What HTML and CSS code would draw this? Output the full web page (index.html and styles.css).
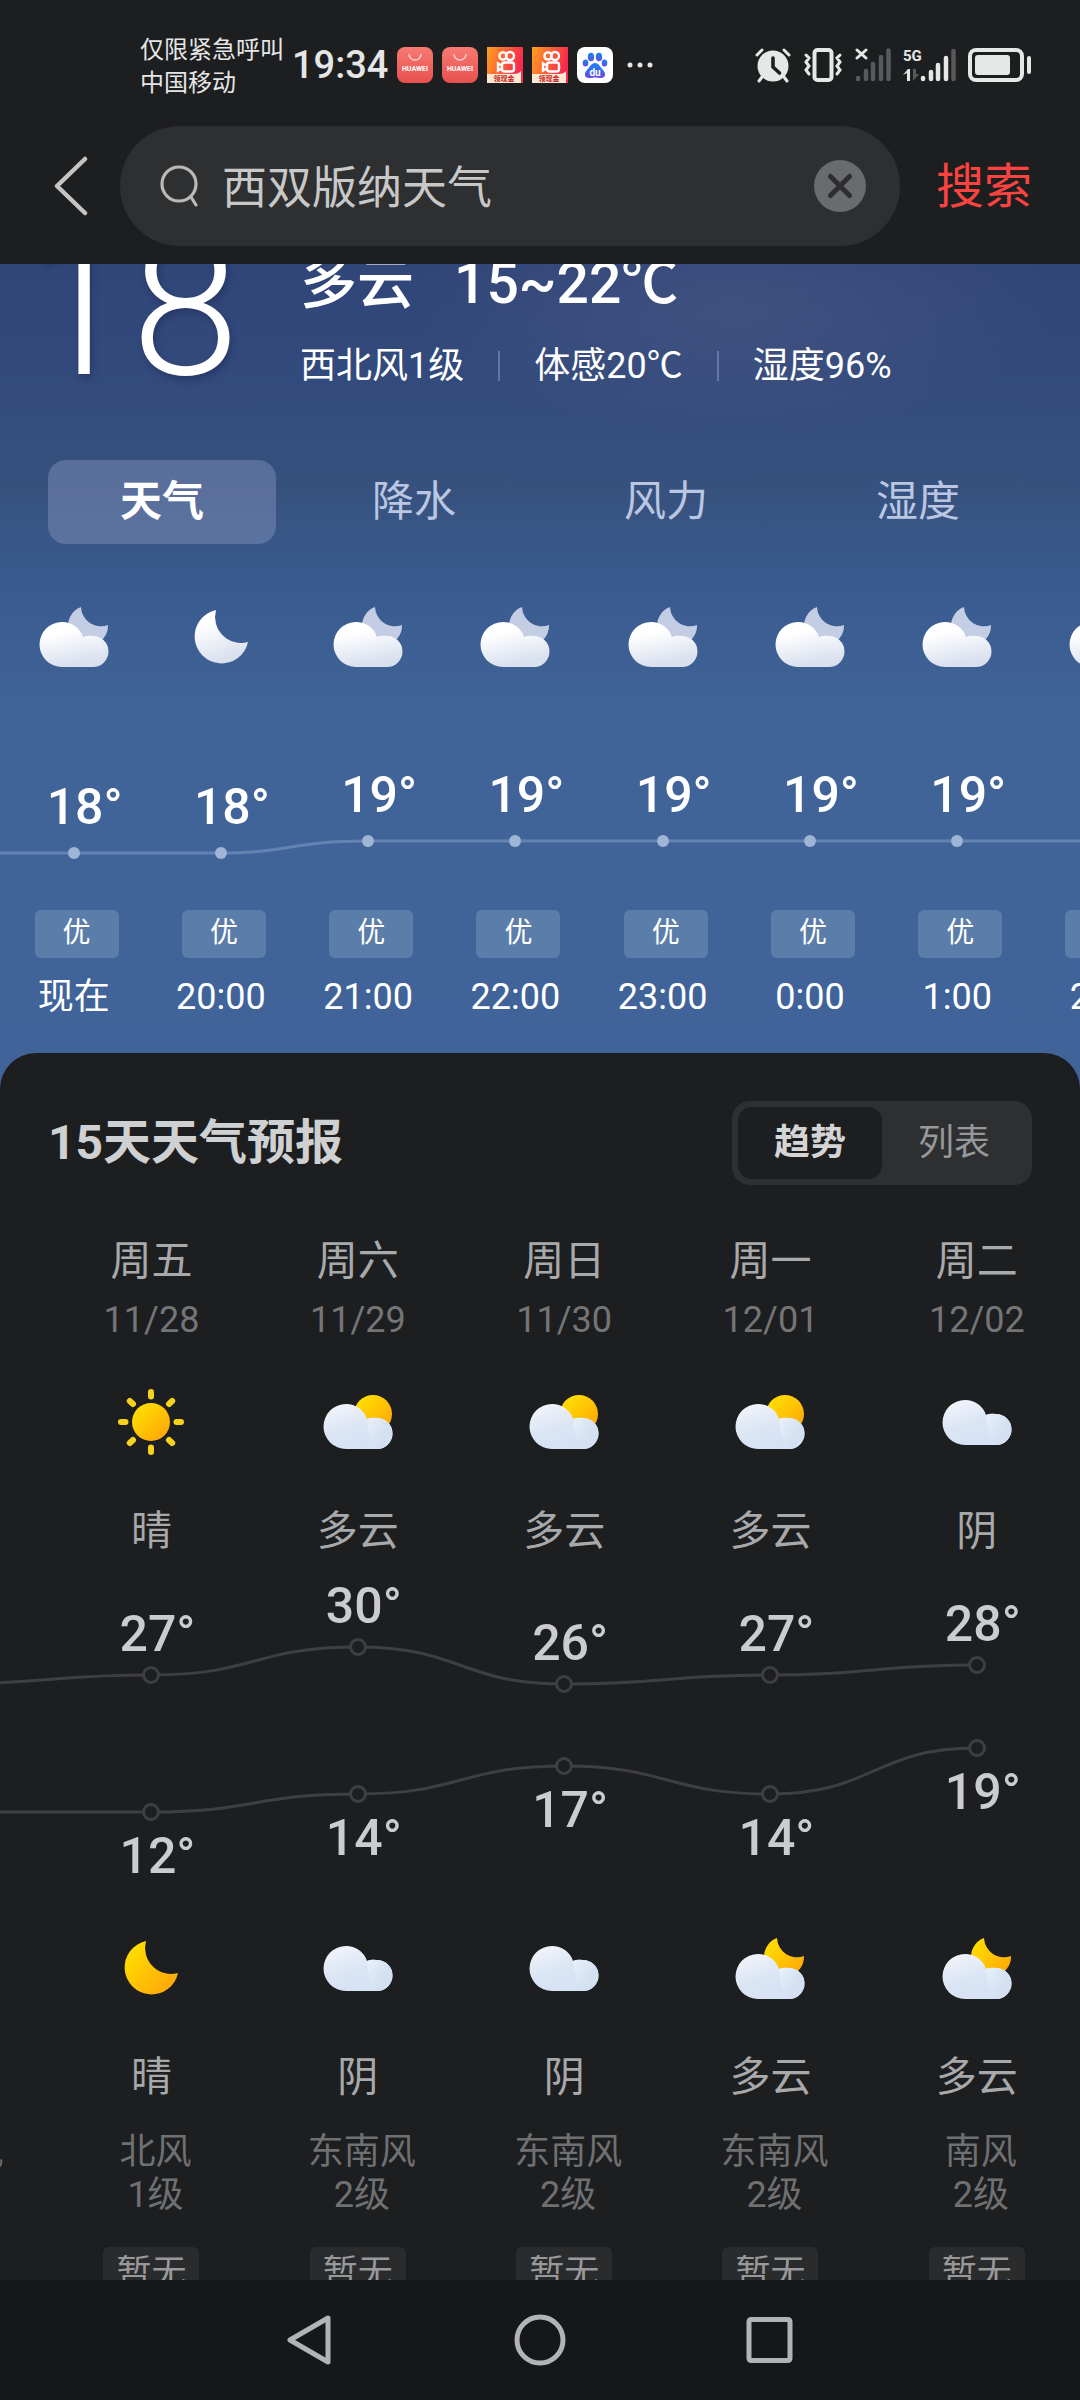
FILE: index.html
```html
<!DOCTYPE html>
<html lang="zh-CN">
<head>
<meta charset="utf-8">
<meta name="viewport" content="width=device-width, initial-scale=1">
<title>西双版纳天气</title>
<link rel="stylesheet" href="styles.css">
</head>
<body>
<svg class="defs" aria-hidden="true">
  <defs>
    <linearGradient id="g-white" x1="0" y1="0" x2="0.3" y2="1"><stop offset="0.3" stop-color="#fff"/><stop offset="1" stop-color="#d9e0ee"/></linearGradient>
    <linearGradient id="g-day" x1="0" y1="0" x2="0.5" y2="1"><stop offset="0" stop-color="#f6f6fb"/><stop offset="0.6" stop-color="#dae5f4"/><stop offset="1" stop-color="#d6e2f5"/></linearGradient>
    <linearGradient id="g-puff" x1="0" y1="0" x2="1" y2="0.7"><stop offset="0" stop-color="#eaf0fa"/><stop offset="0.7" stop-color="#d3e1f2"/></linearGradient>
    <linearGradient id="g-gold" x1="0" y1="0" x2="1" y2="1"><stop offset="0.1" stop-color="#ffe000"/><stop offset="1" stop-color="#ff9f0a"/></linearGradient>
    <linearGradient id="g-app" x1="0" y1="0" x2="1" y2="0.3"><stop offset="0" stop-color="#ffa01e"/><stop offset="1" stop-color="#f8284e"/></linearGradient>
    <linearGradient id="g-paw" x1="0" y1="0" x2="0" y2="1"><stop offset="0.2" stop-color="#1f7cf2"/><stop offset="1" stop-color="#6a4be0"/></linearGradient>
    <linearGradient id="g-shop" x1="0" y1="0" x2="0" y2="1"><stop offset="0" stop-color="#f77a72"/><stop offset="1" stop-color="#e8504f"/></linearGradient>
  </defs>
  <symbol id="cloud-moon" viewBox="0 0 72 72">
    <path d="M43 6A20 20 0 0 0 70 24A20 20 0 1 1 43 6Z" fill="#c3cde4"/>
    <path d="M24 21A22 22 0 0 1 45 36Q49 34 55 35A15 15 0 0 1 55 66H24A22 22 0 0 1 24 21Z" fill="url(#g-white)"/>
  </symbol>
  <symbol id="moon" viewBox="0 0 72 72">
    <path d="M31 9A26 26 0 0 0 63 41A27 27 0 1 1 31 9Z" fill="url(#g-white)"/>
  </symbol>
  <symbol id="moon-gold" viewBox="0 0 72 72">
    <path d="M31 9A26 26 0 0 0 63 41A27 27 0 1 1 31 9Z" fill="url(#g-gold)"/>
  </symbol>
  <symbol id="sun" viewBox="0 0 72 72">
    <circle cx="36" cy="36" r="19" fill="url(#g-gold)"/>
    <path d="M36 6V10.500M36 61.500V66M6 36H10.500M61.500 36H66M14.800 15L18 18M54 54L57.200 57M57.200 15L54 18M18 54L14.800 57" stroke="#f7d21c" stroke-width="6" stroke-linecap="round"/>
  </symbol>
  <symbol id="cloud" viewBox="0 0 72 72">
    <path d="M24 14A22 22 0 0 1 45 29Q49 27 55 28A15 15 0 0 1 55 59H24A22 22 0 0 1 24 14Z" fill="url(#g-day)"/>
    <path d="M45 29Q49 27 55 28A15 15 0 0 1 55 59Q46 48 45 29Z" fill="url(#g-puff)"/>
  </symbol>
  <symbol id="cloud-sun" viewBox="0 0 72 72">
    <circle cx="51" cy="28" r="19" fill="url(#g-gold)"/>
    <use href="#cloud" y="4" width="72" height="72"/>
  </symbol>
  <symbol id="cloud-moon-gold" viewBox="0 0 72 72">
    <path d="M43 6A20 20 0 0 0 70 24A20 20 0 1 1 43 6Z" fill="url(#g-gold)"/>
    <use href="#cloud" y="8" width="72" height="72"/>
  </symbol>
</svg>

<header class="top">
  <div class="status">
    <p class="carrier">仅限紧急呼叫<br>中国移动</p>
    <time class="clock">19:34</time>
    <div class="apps">
      <svg class="app" viewBox="0 0 36 36"><rect width="36" height="36" rx="8" fill="url(#g-shop)"/><path d="M12 7a6 6 0 0 0 12 0" fill="none" stroke="#fbd0cc" stroke-width="1.500"/><text x="18" y="24" text-anchor="middle" font-size="7" font-weight="700" fill="#fff">HUAWEI</text></svg>
      <svg class="app" viewBox="0 0 36 36"><rect width="36" height="36" rx="8" fill="url(#g-shop)"/><path d="M12 7a6 6 0 0 0 12 0" fill="none" stroke="#fbd0cc" stroke-width="1.500"/><text x="18" y="24" text-anchor="middle" font-size="7" font-weight="700" fill="#fff">HUAWEI</text></svg>
      <svg class="app" viewBox="0 0 36 36"><rect width="36" height="36" fill="url(#g-app)"/><g fill="none" stroke="#fff" stroke-width="2.400"><circle cx="16" cy="9" r="3.600"/><circle cx="23" cy="9" r="4"/><rect x="15" y="15.500" width="12" height="9" rx="2.500"/><path d="M15 18.500l-4-2v7l4-2"/></g><path d="M0 27h26q6 0 8-3v12H0z" fill="#fde9d2"/><text x="17" y="34" text-anchor="middle" font-size="7" font-weight="700" fill="#c8201c">领现金</text></svg>
      <svg class="app" viewBox="0 0 36 36"><rect width="36" height="36" fill="url(#g-app)"/><g fill="none" stroke="#fff" stroke-width="2.400"><circle cx="16" cy="9" r="3.600"/><circle cx="23" cy="9" r="4"/><rect x="15" y="15.500" width="12" height="9" rx="2.500"/><path d="M15 18.500l-4-2v7l4-2"/></g><path d="M0 27h26q6 0 8-3v12H0z" fill="#fde9d2"/><text x="17" y="34" text-anchor="middle" font-size="7" font-weight="700" fill="#c8201c">领现金</text></svg>
      <svg class="app" viewBox="0 0 36 36"><rect width="36" height="36" rx="8" fill="#fff"/><g fill="url(#g-paw)"><ellipse cx="14" cy="10" rx="3.200" ry="4.300"/><ellipse cx="22" cy="10" rx="3.200" ry="4.300"/><ellipse cx="8.500" cy="16" rx="2.800" ry="3.600"/><ellipse cx="27.500" cy="16" rx="2.800" ry="3.600"/><path d="M18 16c4 0 5 4 8 7s3 8-2 8c-3 0-4-.5-6-.5s-3 .5-6 .5c-5 0-5-5-2-8s4-7 8-7z"/></g><text x="18" y="29" text-anchor="middle" font-size="10" font-weight="700" fill="#fff">du</text></svg>
      <svg class="more" viewBox="0 0 36 36" fill="#e6e6e6"><circle cx="8" cy="18" r="2.500"/><circle cx="18" cy="18" r="2.500"/><circle cx="28" cy="18" r="2.500"/></svg>
    </div>
    <div class="signals">
      <svg width="36" height="36" viewBox="0 0 36 36"><circle cx="18" cy="19" r="15.500" fill="#e6e8e8"/><path d="M2 8l5-5M34 8l-5-5M7 30l-3 4M29 30l3 4" stroke="#e6e8e8" stroke-width="3" stroke-linecap="round"/><path d="M18 11v9l6.500 6" fill="none" stroke="#1d1e20" stroke-width="3.600" stroke-linecap="round"/></svg>
      <svg width="40" height="36" viewBox="0 0 40 36" fill="none" stroke="#e6e8e8" stroke-linecap="round"><rect x="11.500" y="3" width="17" height="30" rx="3" stroke-width="4"/><path d="M3 8l3 3-3 4 3 4-3 4 3 4M37 8l-3 3 3 4-3 4 3 4-3 4" stroke-width="3"/></svg>
      <svg width="36" height="36" viewBox="0 0 36 36" stroke-linecap="round" stroke-width="4.500"><path d="M3 31v1M11 24v8M18 17v15M26 10v22M33.500 3.500V32" stroke="#58595a"/><path d="M2 3l9 8M11 3l-9 8" stroke="#e6e8e8" stroke-width="3"/></svg>
      <svg width="53" height="36" viewBox="0 0 53 36" stroke-linecap="round" stroke-width="4.500"><text x="0" y="14" font-size="15" font-weight="700" fill="#e6e8e8">5G</text><path d="M20 31v1M28 25v7M35 18v14M43 11v21" stroke="#e6e8e8"/><path d="M50.500 4v28" stroke="#58595a"/><path d="M0 28l5-6h2v12H4v-8z" fill="#e6e8e8"/><path d="M10 22v12l6-7h-3v-5z" fill="#58595a"/></svg>
      <svg width="64" height="36" viewBox="0 0 64 36"><rect x="2" y="3" width="52" height="30" rx="6" fill="none" stroke="#e6e8e8" stroke-width="4"/><rect x="7" y="8" width="35" height="20" rx="3" fill="#e6e8e8"/><rect x="59" y="9" width="4" height="18" rx="2" fill="#e6e8e8"/></svg>
    </div>
  </div>
  <form class="search">
    <button class="back" type="button" aria-label="返回"><svg width="34" height="60" viewBox="0 0 34 60"><path d="M31 3L3 30l28 27" fill="none" stroke="#c4c4c4" stroke-width="4.500" stroke-linecap="round" stroke-linejoin="round"/></svg></button>
    <div class="field">
      <svg width="40" height="44" viewBox="0 0 40 44" fill="none" stroke="#b9b9b9" stroke-width="3.200" stroke-linecap="round"><circle cx="19" cy="20" r="17"/><path d="M31 33l5 8"/></svg>
      <input type="text" value="西双版纳天气" aria-label="搜索内容">
      <button class="clear" type="button" aria-label="清除"><svg width="52" height="52" viewBox="0 0 52 52"><circle cx="26" cy="26" r="26" fill="#6a6b6d"/><path d="M16.500 16.500l19 19M35.500 16.500l-19 19" stroke="#2d2e30" stroke-width="5" stroke-linecap="round"/></svg></button>
    </div>
    <button class="submit" type="submit">搜索</button>
  </form>
</header>

<main class="content">
  <section class="hero">
    <div class="summary">
      <p class="now">18</p>
      <div class="detail">
        <p class="headline"><span>多云</span><span>15~22℃</span></p>
        <ul class="facts"><li>西北风1级</li><li>体感20℃</li><li>湿度96%</li></ul>
      </div>
    </div>
    <div class="tabs">
      <button class="tab tab-on" type="button">天气</button>
      <button class="tab" type="button">降水</button>
      <button class="tab" type="button">风力</button>
      <button class="tab" type="button">湿度</button>
    </div>
    <ul class="hours">
      <li class="hour"><svg class="wx"><use href="#cloud-moon"/></svg><div class="hplot" style="--y:110px"><span class="temp">18°</span><i class="dot"></i></div><span class="aqi">优</span><span class="when">现在</span></li>
      <li class="hour"><svg class="wx"><use href="#moon"/></svg><div class="hplot" style="--y:110px"><span class="temp">18°</span><i class="dot"></i></div><span class="aqi">优</span><span class="when">20:00</span></li>
      <li class="hour"><svg class="wx"><use href="#cloud-moon"/></svg><div class="hplot" style="--y:98px"><span class="temp">19°</span><i class="dot"></i></div><span class="aqi">优</span><span class="when">21:00</span></li>
      <li class="hour"><svg class="wx"><use href="#cloud-moon"/></svg><div class="hplot" style="--y:98px"><span class="temp">19°</span><i class="dot"></i></div><span class="aqi">优</span><span class="when">22:00</span></li>
      <li class="hour"><svg class="wx"><use href="#cloud-moon"/></svg><div class="hplot" style="--y:98px"><span class="temp">19°</span><i class="dot"></i></div><span class="aqi">优</span><span class="when">23:00</span></li>
      <li class="hour"><svg class="wx"><use href="#cloud-moon"/></svg><div class="hplot" style="--y:98px"><span class="temp">19°</span><i class="dot"></i></div><span class="aqi">优</span><span class="when">0:00</span></li>
      <li class="hour"><svg class="wx"><use href="#cloud-moon"/></svg><div class="hplot" style="--y:98px"><span class="temp">19°</span><i class="dot"></i></div><span class="aqi">优</span><span class="when">1:00</span></li>
      <li class="hour"><svg class="wx"><use href="#cloud-moon"/></svg><div class="hplot" style="--y:98px"><span class="temp">19°</span><i class="dot"></i></div><span class="aqi">优</span><span class="when">2:00</span></li>
      <li class="trace" aria-hidden="true"><svg viewBox="0 0 1080 237" preserveAspectRatio="none"><path d="M0 180H221C290 180 290 168 368 168H1080"/></svg></li>
    </ul>
  </section>

  <section class="forecast">
    <div class="heading">
      <h2>15天天气预报</h2>
      <div class="switch"><button class="mode mode-on" type="button">趋势</button><button class="mode" type="button">列表</button></div>
    </div>
    <ul class="days">
      <li class="trace" aria-hidden="true"><svg viewBox="0 0 600 377" preserveAspectRatio="none"><path d="M50 129C100 129 100 120 150 120S200 92 250 92S300 129 350 129S400 120 450 120S500 110 550 110M50 257H150C200 257 200 239 250 239S300 211 350 211S400 239 450 239S500 193 550 193"/></svg></li>
      <li class="day"><span class="week">周四</span><span class="date">11/27</span><svg class="wx"><use href="#cloud-sun"/></svg><span class="cond">多云</span><div class="dplot" style="--y:64px;--gap:110px"><span class="temp">26°</span><i class="ring"></i><i class="ring"></i><span class="temp">12°</span></div><svg class="wx"><use href="#cloud"/></svg><span class="cond">阴</span><p class="wind">东南风<br>2级</p><span class="none">暂无</span></li>
      <li class="day"><span class="week">周五</span><span class="date">11/28</span><svg class="wx"><use href="#sun"/></svg><span class="cond">晴</span><div class="dplot" style="--y:55px;--gap:119px"><span class="temp">27°</span><i class="ring"></i><i class="ring"></i><span class="temp">12°</span></div><svg class="wx"><use href="#moon-gold"/></svg><span class="cond">晴</span><p class="wind">北风<br>1级</p><span class="none">暂无</span></li>
      <li class="day"><span class="week">周六</span><span class="date">11/29</span><svg class="wx"><use href="#cloud-sun"/></svg><span class="cond">多云</span><div class="dplot" style="--y:27px;--gap:129px"><span class="temp">30°</span><i class="ring"></i><i class="ring"></i><span class="temp">14°</span></div><svg class="wx"><use href="#cloud"/></svg><span class="cond">阴</span><p class="wind">东南风<br>2级</p><span class="none">暂无</span></li>
      <li class="day"><span class="week">周日</span><span class="date">11/30</span><svg class="wx"><use href="#cloud-sun"/></svg><span class="cond">多云</span><div class="dplot" style="--y:64px;--gap:64px"><span class="temp">26°</span><i class="ring"></i><i class="ring"></i><span class="temp">17°</span></div><svg class="wx"><use href="#cloud"/></svg><span class="cond">阴</span><p class="wind">东南风<br>2级</p><span class="none">暂无</span></li>
      <li class="day"><span class="week">周一</span><span class="date">12/01</span><svg class="wx"><use href="#cloud-sun"/></svg><span class="cond">多云</span><div class="dplot" style="--y:55px;--gap:101px"><span class="temp">27°</span><i class="ring"></i><i class="ring"></i><span class="temp">14°</span></div><svg class="wx"><use href="#cloud-moon-gold"/></svg><span class="cond">多云</span><p class="wind">东南风<br>2级</p><span class="none">暂无</span></li>
      <li class="day"><span class="week">周二</span><span class="date">12/02</span><svg class="wx"><use href="#cloud"/></svg><span class="cond">阴</span><div class="dplot" style="--y:45px;--gap:65px"><span class="temp">28°</span><i class="ring"></i><i class="ring"></i><span class="temp">19°</span></div><svg class="wx"><use href="#cloud-moon-gold"/></svg><span class="cond">多云</span><p class="wind">南风<br>2级</p><span class="none">暂无</span></li>
    </ul>
  </section>
</main>

<nav class="sysnav">
  <button type="button" aria-label="返回"><svg width="52" height="52" viewBox="0 0 52 52"><path d="M44 4v44L6 26z"/></svg></button>
  <button type="button" aria-label="主页"><svg width="52" height="52" viewBox="0 0 52 52"><circle cx="26" cy="26" r="23"/></svg></button>
  <button type="button" aria-label="最近任务"><svg width="52" height="52" viewBox="0 0 52 52"><rect x="5" y="5.500" width="41" height="41" rx="2"/></svg></button>
</nav>
</body>
</html>
```
FILE: styles.css
```css
* { box-sizing: border-box; margin: 0; padding: 0; }
body {
  display: flex;
  flex-direction: column;
  height: 100vh;
  overflow: hidden;
  background: #1d1e20;
  color: #fff;
  font-family: Roboto, "Noto Sans CJK SC", sans-serif;
}
ul { list-style: none; }
button, input { font: inherit; color: inherit; background: none; border: 0; }
button { display: flex; align-items: center; justify-content: center; }
svg { display: block; flex: none; }
.defs { position: absolute; width: 0; height: 0; }

/* status bar and search */
.top { flex: none; padding-bottom: 18px; }
.status { display: flex; align-items: center; height: 126px; padding: 4px 48px 0 140px; color: #e6e6e6; }
.carrier { padding-top: 4px; font-size: 24px; line-height: 33px; }
.clock { margin-left: 8px; font-size: 38px; font-weight: 500; line-height: 48px; }
.apps { display: flex; gap: 9px; margin-left: 9px; }
.app, .more { width: 36px; height: 36px; }
.signals { display: flex; gap: 12px; margin-left: auto; }
.search { display: flex; align-items: center; padding: 0 48px; }
.back { width: 46px; height: 60px; }
.field { display: flex; flex: 1; align-items: center; height: 120px; margin-left: 26px; padding: 0 34px 0 40px; border-radius: 60px; background: #2e2f31; }
.field input { flex: 1; min-width: 0; margin-left: 22px; padding-top: 5px; color: #c8c8c8; font-size: 45px; line-height: 60px; outline: 0; }
.submit { margin-left: 36px; padding-top: 2px; color: #fb4340; font-size: 48px; line-height: 60px; }

/* current conditions */
.content { flex: 1; min-height: 0; overflow: hidden; }
.hero {
  margin-top: -28px;
  padding-bottom: 68px;
  background:
    radial-gradient(ellipse 320px 130px at 68% 70px, rgba(120, 120, 155, .2), transparent),
    linear-gradient(#304477, #334a7c 140px, #37527f 260px, #395a8e 340px, #406398 470px, #406399);
}
.summary { display: flex; padding-left: 24px; }
.now { width: 276px; font-size: 194px; font-weight: 300; line-height: 144px; text-shadow: 2px 4px 6px rgba(20, 30, 70, .35); }
.detail { padding-top: 16px; }
.headline { display: flex; gap: 40px; font-size: 57px; font-weight: 500; line-height: 64px; }
.facts { display: flex; align-items: center; margin-top: 26px; font-size: 36px; line-height: 48px; }
.facts li { display: flex; align-items: center; }
.facts li + li::before { content: ""; width: 2px; height: 30px; margin: 0 34px; background: rgba(150, 170, 215, .45); }
.tabs { display: grid; grid-template-columns: repeat(4, 1fr); gap: 24px; padding: 0 48px; margin-top: 70px; }
.tab { height: 84px; border-radius: 18px; color: #bac6e2; font-size: 42px; line-height: 48px; }
.tab-on { background: rgba(165, 175, 215, .32); color: #fff; font-weight: 700; }

/* hourly strip */
.hours { position: relative; display: flex; margin-top: 57px; }
.hour { display: flex; flex: 0 0 calc(100% * 3 / 22); flex-direction: column; align-items: center; }
.wx { width: 72px; height: 72px; }
.trace { position: absolute; left: 0; right: 0; }
.hours .trace { top: 72px; height: 237px; }
.trace svg { width: 100%; height: 100%; }
.trace path { fill: none; stroke: #6384b2; stroke-width: 3; vector-effect: non-scaling-stroke; }
.hplot { display: flex; flex-direction: column; align-items: center; height: 237px; padding-top: var(--y); }
.temp { font-size: 50px; font-weight: 500; line-height: 48px; }
.hours .temp { padding-left: 22px; }
.dot { z-index: 1; width: 12px; height: 12px; margin-top: 16px; border-radius: 50%; background: #9fb5d6; }
.aqi { width: 84px; height: 48px; margin-left: 6px; border-radius: 6px; background: #5b7da9; font-size: 28px; line-height: 46px; text-align: center; }
.when { margin-top: 15px; font-size: 36px; line-height: 48px; }

/* fifteen-day forecast */
.forecast { position: relative; margin-top: -36px; padding-top: 48px; border-radius: 36px 36px 0 0; background: #1d1e20; color: #a8a9aa; }
.heading { display: flex; align-items: center; justify-content: space-between; padding: 0 48px; }
.heading h2 { color: #cfd0d1; font-size: 48px; font-weight: 700; line-height: 60px; }
.switch { display: flex; width: 300px; height: 84px; padding: 6px; border-radius: 18px; background: #2e2f31; }
.mode { flex: 1; border-radius: 14px; color: #97989a; font-size: 36px; line-height: 48px; }
.mode-on { background: #1d1e20; color: #d4d4d5; font-weight: 700; }
.days { position: relative; display: grid; grid-template-columns: repeat(6, 1fr); margin: 52px 0 0 -158px; }
.days .trace { top: 318px; height: 377px; }
.days .trace path { stroke: #3e3f41; }
.day { display: flex; flex-direction: column; align-items: center; }
.week, .cond { font-size: 41px; line-height: 48px; }
.date { margin-top: 11px; color: #747576; font-size: 36px; line-height: 48px; }
.date + .wx { margin-top: 42px; }
.cond { margin-top: 49px; }
.dplot { display: flex; flex-direction: column; align-items: center; height: 377px; padding-top: var(--y); }
.days .temp { padding-left: 12px; color: #cbccce; }
.ring { z-index: 1; width: 18px; height: 18px; margin-top: 8px; border: 3px solid #3e3f41; border-radius: 50%; background: #1d1e20; }
.ring + .ring { margin: var(--gap) 0 11px; }
.wind { margin-top: 30px; padding-left: 8px; color: #6f7071; font-size: 36px; line-height: 43px; text-align: center; }
.none { margin-top: 30px; width: 96px; height: 54px; border-radius: 6px; background: #2a2b2d; color: #98999a; font-size: 35px; line-height: 54px; text-align: center; }

/* system navigation */
.sysnav { display: flex; flex: none; align-items: center; justify-content: center; gap: 178px; height: 120px; background: #16171a; }
.sysnav svg { fill: none; stroke: #b2b3b4; stroke-width: 5; stroke-linejoin: round; }
```
